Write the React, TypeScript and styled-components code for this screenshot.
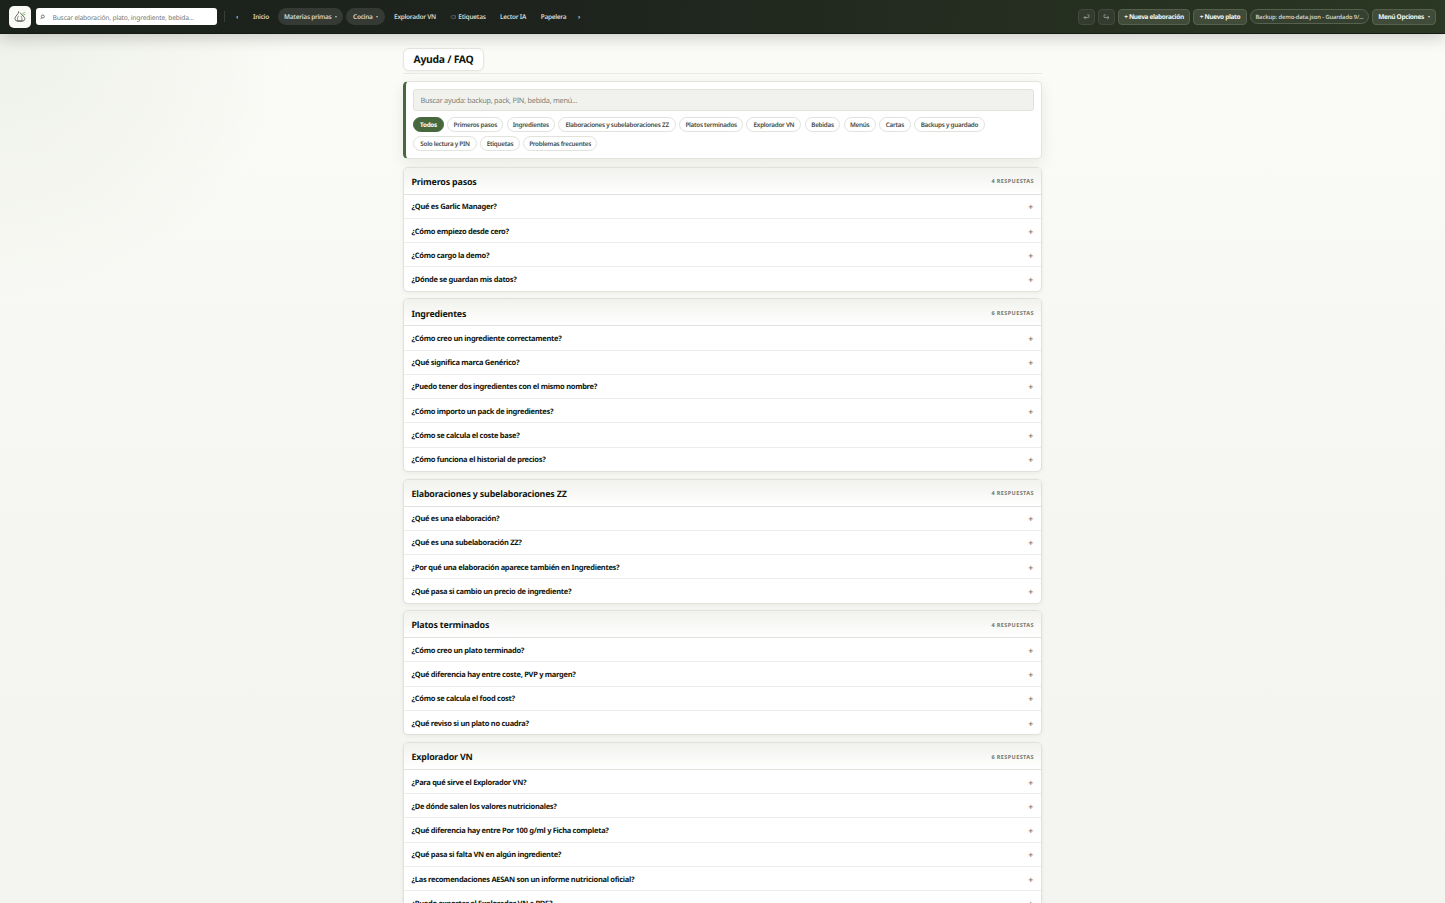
import React from "react";
import styled, { createGlobalStyle, css } from "styled-components";

const Global = createGlobalStyle`
  * { box-sizing: border-box; }
  html, body { margin: 0; height: 903px; overflow: hidden; }
  body {
    font-family: "Noto Sans", "Open Sans", sans-serif;
    text-rendering: geometricPrecision;
    color: #10160f;
    background:
      radial-gradient(circle at 0 0, rgba(74, 107, 62, 0.08), rgba(74, 107, 62, 0) 300px),
      linear-gradient(180deg, #fbfbf7 0, #f5f6f1 60%, #f4f5f0 100%);
  }
  button, input { font-family: inherit; margin: 0; text-rendering: inherit; }
`;

const TopBar = styled.header`
  position: relative;
  z-index: 2;
  display: flex;
  align-items: center;
  height: 34px;
  padding: 0 9px;
  background: linear-gradient(100deg, #1b211b 0%, #1e241d 40%, #2b3823 100%);
  border-bottom: 1px solid #151a14;
  box-shadow: 0 4px 16px rgba(20, 26, 18, 0.2);
`;

const Logo = styled.div`
  width: 22px;
  height: 22px;
  border-radius: 5px;
  background: #fafaf6;
  display: flex;
  align-items: center;
  justify-content: center;
`;

const Search = styled.label`
  display: flex;
  align-items: center;
  width: 181px;
  height: 17px;
  margin-left: 5px;
  padding-left: 4px;
  border-radius: 3px;
  background: #fff;
  svg { flex: none; }
`;

const SearchInput = styled.input`
  border: 0;
  outline: 0;
  padding: 1px 0 0;
  margin-left: 7.5px !important;
  width: 160px;
  height: 16px;
  background: transparent;
  font-size: 6.7px;
  letter-spacing: -0.18px;
  &::placeholder { color: #757b74; opacity: 1; }
`;

const Divider = styled.span`
  width: 1px;
  height: 11px;
  margin-left: 7px;
  background: #384036;
`;

const Nav = styled.nav`
  display: flex;
  align-items: center;
`;

const NavItem = styled.a<{ $w: number; $pill?: boolean; $gap?: number }>`
  display: flex;
  align-items: center;
  justify-content: center;
  gap: ${(p) => (p.$pill ? 3.4 : 2)}px;
  width: ${(p) => p.$w}px;
  height: 17px;
  margin-left: ${(p) => p.$gap ?? 0}px;
  padding-top: 0.5px;
  border-radius: 9px;
  background: ${(p) => (p.$pill ? "#353b34" : "transparent")};
  color: #d5d8d2;
  font-size: 6.5px;
  font-weight: 600;
  letter-spacing: -0.28px;
  white-space: nowrap;
`;

const Caret = styled.i`
  border: 1.5px solid transparent;
  border-top: 2px solid currentColor;
  border-bottom: 0;
  opacity: 0.85;
`;

const Actions = styled.div`
  display: flex;
  align-items: center;
  gap: 3px;
  margin-left: auto;
`;

const ActionButton = styled.button<{ $w: number; $kind?: "icon" | "status" }>`
  display: flex;
  align-items: center;
  justify-content: center;
  gap: 4px;
  width: ${(p) => p.$w}px;
  height: 16px;
  padding: 0;
  border: 1px solid #56624e;
  border-radius: 4px;
  background: #404b39;
  color: #f3f5f0;
  font-size: 6.5px;
  font-weight: 700;
  letter-spacing: -0.34px;
  white-space: nowrap;
  ${(p) => p.$kind === "icon" && css`
    background: #333b2f;
    border-color: #414a3c;
    color: #9ba196;
  `}
  ${(p) => p.$kind === "status" && css`
    height: 15px;
    border-radius: 8px;
    background: #364030;
    color: #ccd1c7;
    font-size: 5.8px;
    font-weight: 600;
    letter-spacing: -0.12px;
  `}
`;

const Page = styled.main`
  width: 639px;
  margin: 0 auto;
  padding-top: 14px;
`;

const TitleRow = styled.div`
  height: 26px;
  border-bottom: 1px solid #e8e9e4;
`;

const Title = styled.h1`
  display: flex;
  align-items: center;
  justify-content: center;
  width: 81px;
  height: 23px;
  margin: 0;
  border: 1px solid #e6e7e1;
  border-radius: 6px;
  background: #fff;
  box-shadow: 0 1px 3px rgba(30, 40, 25, 0.05);
  font-size: 10.4px;
  font-weight: 700;
  letter-spacing: -0.28px;
  white-space: nowrap;
`;

const FilterCard = styled.section`
  height: 78.6px;
  margin-top: 6.6px;
  padding: 7.5px 7.5px 0 7px;
  border: 1px solid #e2e4dd;
  border-left: 3px solid #47683c;
  border-radius: 5px;
  background: #fff;
  box-shadow: 0 4px 14px rgba(30, 40, 25, 0.08);
`;

const HelpInput = styled.input`
  display: block;
  width: 100%;
  height: 22px;
  padding: 1px 6.5px 0;
  border: 1px solid #e0e2db;
  border-radius: 3px;
  outline: 0;
  background: #f1f2ed;
  font-size: 7.3px;
  letter-spacing: -0.24px;
  &::placeholder { color: #7c807a; opacity: 1; }
`;

const Chips = styled.div`
  display: flex;
  flex-wrap: wrap;
  gap: 3.2px 3.3px;
  margin-top: 6px;
`;

const Chip = styled.button<{ $w: number; $on?: boolean }>`
  width: ${(p) => p.$w}px;
  height: 15.3px;
  padding: 0;
  border: 1px solid ${(p) => (p.$on ? "#47683c" : "#e0e2dc")};
  border-radius: 8px;
  background: ${(p) => (p.$on ? "#47683c" : "#fff")};
  color: ${(p) => (p.$on ? "#fff" : "#454a44")};
  font-size: 6.3px;
  font-weight: ${(p) => (p.$on ? 700 : 600)};
  letter-spacing: -0.26px;
  white-space: nowrap;
`;

const Sections = styled.div`
  display: flex;
  flex-direction: column;
  gap: 6.8px;
  margin-top: 7.6px;
`;

const Group = styled.section`
  border: 1px solid #dfe1da;
  border-radius: 5px;
  background: #fff;
  overflow: hidden;
  box-shadow: 0 1px 4px rgba(30, 40, 25, 0.06);
`;

const GroupHead = styled.div`
  display: flex;
  align-items: center;
  justify-content: space-between;
  height: 26.9px;
  padding: 1.2px 7.5px 0;
  border-bottom: 1px solid #e0e2dc;
  background: linear-gradient(180deg, #f1f2ed, #fff);
`;

const GroupTitle = styled.h2`
  margin: 0;
  font-size: 8.9px;
  font-weight: 700;
  letter-spacing: -0.18px;
`;

const Count = styled.span`
  color: #747a72;
  font-size: 5.5px;
  font-weight: 700;
  letter-spacing: 0.4px;
  margin-right: -0.4px;
`;

const Row = styled.div`
  display: flex;
  align-items: center;
  justify-content: space-between;
  height: 24.25px;
  padding: 2px 8px 0 7.5px;
  border-bottom: 1px solid #ecede8;
  font-size: 7.5px;
  font-weight: 700;
  letter-spacing: -0.29px;
  &:last-child { border-bottom: 0; height: 23.25px; }
`;

const Plus = styled.span`
  color: #70766e;
  font-size: 8.8px;
  font-weight: 500;
  line-height: 10px;
`;

const chips: [string, number][] = [
  ["Todos", 31], ["Primeros pasos", 56], ["Ingredientes", 48.5],
  ["Elaboraciones y subelaboraciones ZZ", 117.5], ["Platos terminados", 64],
  ["Explorador VN", 55], ["Bebidas", 35.5], ["Menús", 32], ["Cartas", 32],
  ["Backups y guardado", 70.5], ["Solo lectura y PIN", 64], ["Etiquetas", 39.5],
  ["Problemas frecuentes", 74],
];

const groups: { title: string; items: string[] }[] = [
  { title: "Primeros pasos", items: ["¿Qué es Garlic Manager?", "¿Cómo empiezo desde cero?", "¿Cómo cargo la demo?", "¿Dónde se guardan mis datos?"] },
  { title: "Ingredientes", items: ["¿Cómo creo un ingrediente correctamente?", "¿Qué significa marca Genérico?", "¿Puedo tener dos ingredientes con el mismo nombre?", "¿Cómo importo un pack de ingredientes?", "¿Cómo se calcula el coste base?", "¿Cómo funciona el historial de precios?"] },
  { title: "Elaboraciones y subelaboraciones ZZ", items: ["¿Qué es una elaboración?", "¿Qué es una subelaboración ZZ?", "¿Por qué una elaboración aparece también en Ingredientes?", "¿Qué pasa si cambio un precio de ingrediente?"] },
  { title: "Platos terminados", items: ["¿Cómo creo un plato terminado?", "¿Qué diferencia hay entre coste, PVP y margen?", "¿Cómo se calcula el food cost?", "¿Qué reviso si un plato no cuadra?"] },
  { title: "Explorador VN", items: ["¿Para qué sirve el Explorador VN?", "¿De dónde salen los valores nutricionales?", "¿Qué diferencia hay entre Por 100 g/ml y Ficha completa?", "¿Qué pasa si falta VN en algún ingrediente?", "¿Las recomendaciones AESAN son un informe nutricional oficial?", "¿Puedo exportar el Explorador VN a PDF?"] },
];

const GarlicIcon = () => (
  <svg width="14" height="14" viewBox="0 0 14 14" fill="none" strokeWidth="0.9" strokeLinecap="round" strokeLinejoin="round">
    <path d="M5.8 1.6C6 4.2 2 5.8 1.9 8.6c.1 1.8 2 2.9 5 2.9s5-1 5-3C11.7 6.6 8.6 5.6 7.4 3" stroke="#5c605c" />
    <path d="M5.2 6.2C4.2 8 4.4 9.6 5 11M8.2 6.4c1 1.5 1 3.2.4 4.6M2.8 10.6h8.2" stroke="#7b807b" />
    <path d="M8.8 4.8C9.2 3.4 10.4 3.2 11.8 2.2M10.4 5l1.7-.7" stroke="#86b765" />
  </svg>
);

const SearchIcon = () => (
  <svg width="5" height="6" viewBox="0 0 5 6" fill="none" stroke="#454b45" strokeWidth="0.7">
    <circle cx="2.8" cy="2.5" r="1.5" />
    <path d="M1.7 3.7L.6 5.1" />
  </svg>
);

const TurnIcon = ({ flip }: { flip?: boolean }) => (
  <svg width="7" height="6" viewBox="0 0 7 6" fill="none" stroke="currentColor" strokeWidth="0.9">
    <path
      d={flip ? "M2.6 .8H1.7Q1 .8 1 1.5V2.7Q1 3.6 2 3.6H6M4.4 2L6 3.6L4.4 5.2" : "M4.4 .8H5.3Q6 .8 6 1.5V2.7Q6 3.6 5 3.6H1M2.6 2L1 3.6L2.6 5.2"}
    />
  </svg>
);

const TagIcon = () => (
  <svg width="6" height="5" viewBox="0 0 6 5" fill="none" stroke="#7b8178" strokeWidth="0.6">
    <path d="M.5 3L1.9 1.7H5.5V4.3H1.9Z" />
  </svg>
);

export default function App() {
  return (
    <>
      <Global />
      <TopBar>
        <Logo><GarlicIcon /></Logo>
        <Search>
          <SearchIcon />
          <SearchInput placeholder="Buscar elaboración, plato, ingrediente, bebida..." />
        </Search>
        <Divider />
        <Nav>
          <NavItem $w={10} $gap={7}>‹</NavItem>
          <NavItem $w={28} $gap={5}>Inicio</NavItem>
          <NavItem $w={65} $gap={3} $pill>Materias primas<Caret /></NavItem>
          <NavItem $w={39} $gap={3} $pill>Cocina<Caret /></NavItem>
          <NavItem $w={54} $gap={3}>Explorador VN</NavItem>
          <NavItem $w={46} $gap={3}><TagIcon />Etiquetas</NavItem>
          <NavItem $w={38} $gap={3}>Lector IA</NavItem>
          <NavItem $w={37} $gap={3}>Papelera</NavItem>
          <NavItem $w={10} $gap={2}>›</NavItem>
        </Nav>
        <Actions>
          <ActionButton $w={17} $kind="icon" aria-label="Deshacer"><TurnIcon /></ActionButton>
          <ActionButton $w={17} $kind="icon" aria-label="Rehacer"><TurnIcon flip /></ActionButton>
          <ActionButton $w={72}>+ Nueva elaboración</ActionButton>
          <ActionButton $w={54}>+ Nuevo plato</ActionButton>
          <ActionButton $w={119} $kind="status">Backup: demo-data.json - Guardado 9/...</ActionButton>
          <ActionButton $w={64}>Menú Opciones<Caret /></ActionButton>
        </Actions>
      </TopBar>
      <Page>
        <TitleRow><Title>Ayuda / FAQ</Title></TitleRow>
        <FilterCard>
          <HelpInput placeholder="Buscar ayuda: backup, pack, PIN, bebida, menú..." />
          <Chips>
            {chips.map(([label, w], i) => (
              <Chip key={label} $w={w} $on={i === 0}>{label}</Chip>
            ))}
          </Chips>
        </FilterCard>
        <Sections>
          {groups.map((g) => (
            <Group key={g.title}>
              <GroupHead>
                <GroupTitle>{g.title}</GroupTitle>
                <Count>{g.items.length} RESPUESTAS</Count>
              </GroupHead>
              {g.items.map((q) => (
                <Row key={q}><span>{q}</span><Plus>+</Plus></Row>
              ))}
            </Group>
          ))}
        </Sections>
      </Page>
    </>
  );
}
